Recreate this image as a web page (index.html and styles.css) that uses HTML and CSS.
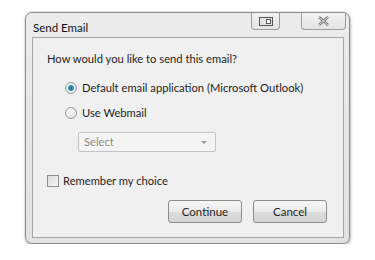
FILE: index.html
```html
<!DOCTYPE html>
<html lang="en">
<head>
<meta charset="UTF-8">
<meta name="viewport" content="width=device-width, initial-scale=1.0">
<title>Send Email</title>
<link rel="stylesheet" href="styles.css">
</head>
<body>

<div class="window">
  <div class="titlebar">
    <span class="title">Send Email</span>
    <div class="caption-buttons">
      <span class="cap-btn cap-help">
        <svg width="14" height="9" viewBox="0 0 14 9">
          <rect x="0.5" y="0.5" width="13" height="8" fill="#e4e4e4" stroke="#555"/>
          <rect x="7.5" y="2.5" width="4" height="4" fill="#fff" stroke="#555"/>
        </svg>
      </span>
      <span class="cap-btn cap-close">
        <svg width="11" height="10" viewBox="0 0 11 10">
          <path d="M1 1 L10 9 M10 1 L1 9" stroke="#777" stroke-width="2.4" fill="none"/>
          <path d="M1 1 L10 9 M10 1 L1 9" stroke="#f4f4f4" stroke-width="0.8" fill="none"/>
        </svg>
      </span>
    </div>
  </div>

  <div class="panel">
    <p class="question">How would you like to send this email?</p>

    <div class="options">
      <label class="option">
        <span class="radio checked"></span>
        Default email application (Microsoft Outlook)
      </label>
      <label class="option">
        <span class="radio"></span>
        Use Webmail
      </label>
      <div class="select">
        <span>Select</span>
        <span class="arrow"></span>
      </div>
    </div>

    <label class="remember">
      <span class="checkbox"></span>
      Remember my choice
    </label>

    <div class="actions">
      <button class="btn">Continue</button>
      <button class="btn">Cancel</button>
    </div>
  </div>
</div>

</body>
</html>
```

FILE: styles.css
```css
body {
  margin: 0;
  background-color: #fff;
  font-family: Lato, "Liberation Sans", sans-serif;
  font-size: 11.2px;
  line-height: 16px;
  color: #1e1e1e;
}

.window {
  margin: 12px 0 0 25px;
  width: 325px;
  height: 232px;
  box-sizing: border-box;
  border: 1px solid #8a8a8a;
  border-radius: 7px;
  background: linear-gradient(#ececec, #e2e2e2);
  box-shadow: 0 0 2px rgba(0, 0, 0, 0.25), 1px 2px 3px rgba(0, 0, 0, 0.2);
  padding: 0 5px 5px 6px;
  display: flex;
  flex-direction: column;
}

.titlebar {
  height: 24px;
  flex-shrink: 0;
  display: flex;
  justify-content: space-between;
  align-items: flex-start;
}

.title {
  margin-top: 7px;
  padding-left: 1px;
  font-size: 11.5px;
  color: #111;
}

.caption-buttons {
  display: flex;
  gap: 21px;
  margin-right: -2px;
}

.cap-btn {
  display: flex;
  align-items: center;
  justify-content: center;
  height: 16px;
  border: 1px solid #9c9c9c;
  border-top: none;
  border-radius: 0 0 4px 4px;
  background: linear-gradient(#f2f2f2, #e4e4e4);
}

.cap-help {
  width: 27px;
}

.cap-close {
  width: 43px;
}

.panel {
  flex: 1;
  border: 1px solid #a5a5a5;
  background-color: #f0f0f0;
  padding: 13px 14px 0 14px;
}

.question {
  margin: 0 0 12px 0;
  white-space: nowrap;
}

.options {
  padding-left: 18px;
}

.option {
  display: flex;
  align-items: center;
  gap: 5px;
  height: 17px;
  margin-bottom: 8px;
  white-space: nowrap;
}

.radio {
  width: 10px;
  height: 10px;
  border-radius: 50%;
  border: 1px solid #9a9a9a;
  background: radial-gradient(circle at 40% 35%, #fff, #d6d6d6);
}

.radio.checked {
  background: radial-gradient(circle, #2a6d8e 0, #3b8fb8 2.5px, #e8f3f8 3.5px, #d8d8d8 100%);
}

.select {
  margin: 11px 0 0 13px;
  width: 138px;
  height: 20px;
  box-sizing: border-box;
  border: 1px solid #c4c4c4;
  border-radius: 2px;
  background-color: #f4f4f4;
  display: flex;
  align-items: center;
  justify-content: space-between;
  padding: 0 8px 0 5px;
  color: #8c8c8c;
}

.arrow {
  width: 0;
  height: 0;
  border-left: 3px solid transparent;
  border-right: 3px solid transparent;
  border-top: 3px solid #9a9a9a;
}

.remember {
  display: flex;
  align-items: center;
  gap: 4px;
  margin-top: 21px;
}

.checkbox {
  width: 10px;
  height: 10px;
  border: 1px solid #8e8e8e;
  background: linear-gradient(135deg, #dcdcdc, #f6f6f6);
}

.actions {
  display: flex;
  justify-content: flex-end;
  gap: 11px;
  margin-top: 11px;
  margin-right: 2px;
}

.btn {
  width: 74px;
  height: 23px;
  border: 1px solid #8d8d8d;
  border-radius: 3px;
  background: linear-gradient(#f6f6f6 0, #ebebeb 50%, #dddddd 51%, #d4d4d4 100%);
  font-family: inherit;
  font-size: 11.5px;
  color: #1e1e1e;
  padding: 0;
}
```
